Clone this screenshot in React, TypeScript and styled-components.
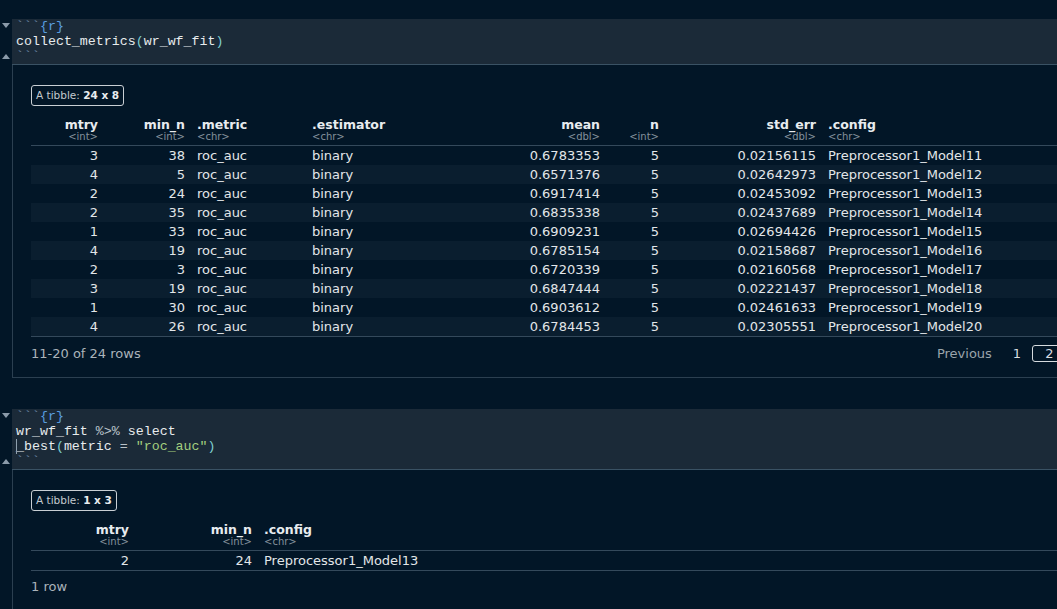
import React from "react";
import styled, { createGlobalStyle } from "styled-components";

const Global = createGlobalStyle`
  * { box-sizing: border-box; }
  html, body { margin: 0; padding: 0; background: #021627; overflow: hidden; }
  body { font-family: "DejaVu Sans", Verdana, sans-serif; color: #dfe4e8; }
`;

const Page = styled.div`
  display: flex;
  flex-direction: column;
  padding-top: 19px;
  width: 1057px;
  height: 609px;
`;

const Row = styled.div<{ $gap?: number; $grow?: boolean }>`
  display: flex;
  margin-top: ${(p) => p.$gap ?? 0}px;
  flex: ${(p) => (p.$grow ? 1 : "none")};
`;

const Gutter = styled.div`
  width: 12px;
  flex: none;
  display: flex;
  flex-direction: column;
  justify-content: space-between;
  align-items: center;
  padding: 4px 1px 6px 0;
`;

const Editor = styled.div`
  flex: 1;
  background: #1b2a38;
  border-bottom: 1px solid #3a5264;
  padding: 0 0 0 4px;
  font-family: "Liberation Mono", "DejaVu Sans Mono", monospace;
  font-size: 13.3px;
  line-height: 15px;
  color: #e4e8ea;
  white-space: pre;
`;

const CodeLine = styled.div`
  height: 15px;
  position: relative;
`;

const Tok = styled.span<{ $c: string }>`
  color: ${(p) => p.$c};
`;

const Cursor = styled.span`
  position: absolute;
  left: 0;
  top: 0;
  height: 15px;
  border-left: 1px solid #8fa0ae;
`;

const Output = styled.div<{ $bottom?: boolean }>`
  flex: 1;
  overflow: hidden;
  border-left: 1px solid #2b3f50;
  border-bottom: ${(p) => (p.$bottom ? "1px solid #2b3f50" : "none")};
  padding: 20px 0 ${(p) => (p.$bottom ? 15 : 0)}px 18px;
`;

const Wrap = styled.div`
  width: 1110px;
`;

const TibbleLabel = styled.div`
  width: fit-content;
  border: 1px solid #c9cfd4;
  border-radius: 3px;
  padding: 0 4px;
  font-size: 10.5px;
  line-height: 19px;
  color: #c3c9ce;
  b { color: #e8ecef; font-weight: bold; }
`;

const Table = styled.table`
  width: 100%;
  table-layout: fixed;
  border-collapse: collapse;
  font-size: 13px;
`;

const Th = styled.th<{ $w?: number; $right?: boolean }>`
  width: ${(p) => (p.$w ? `${p.$w}px` : "auto")};
  text-align: ${(p) => (p.$right ? "right" : "left")};
  padding: 11px 6px 3px;
  border-bottom: 1px solid #34495b;
  vertical-align: bottom;
`;

const ColName = styled.div`
  font-weight: bold;
  font-size: 12.5px;
  line-height: 15px;
  color: #e8ecef;
`;

const ColType = styled.div`
  font-weight: normal;
  font-size: 10px;
  line-height: 10px;
  color: #84919c;
`;

const Tr = styled.tr`
  &:nth-child(even) { background: #0a1e2f; }
  &:last-child td { border-bottom: 1px solid #34495b; }
`;

const Td = styled.td<{ $right?: boolean }>`
  text-align: ${(p) => (p.$right ? "right" : "left")};
  padding: 0 6px;
  line-height: 19px;
  height: 19px;
  white-space: nowrap;
  color: #e2e6e9;
`;

const Footer = styled.div`
  display: flex;
  justify-content: space-between;
  align-items: center;
  padding-top: 8px;
  font-size: 13px;
  line-height: 15px;
`;

const RowCount = styled.span`
  color: #aab3ba;
`;

const Pager = styled.div`
  display: flex;
  align-items: center;
  gap: 4px;
`;

const PageBtn = styled.span<{ $active?: boolean; $muted?: boolean }>`
  border: 1px solid ${(p) => (p.$active ? "#d6dbdf" : "transparent")};
  border-radius: 3px;
  padding: 0 ${(p) => (p.$active ? 12 : 6)}px;
  color: ${(p) => (p.$muted ? "#9ba4ab" : "#d8dde1")};
  &:first-child { margin-right: 3px; }
`;

const Tri = ({ up }: { up?: boolean }) => (
  <svg width="8" height="6" viewBox="0 0 8 6">
    <polygon points={up ? "0,6 8,6 4,1" : "0,0 8,0 4,5"} fill="#8a9aa9" />
  </svg>
);

const C = {
  tick: "#7391ae",
  brace: "#5a9fe0",
  text: "#e8ecee",
  paren: "#7fcfd0",
  op: "#b9c2c9",
  str: "#a3cf7f",
};

type Col = { name: string; type: string; w?: number; right?: boolean };

const cols1: Col[] = [
  { name: "mtry", type: "<int>", w: 73, right: true },
  { name: "min_n", type: "<int>", w: 87, right: true },
  { name: ".metric", type: "<chr>", w: 115 },
  { name: ".estimator", type: "<chr>", w: 200 },
  { name: "mean", type: "<dbl>", w: 100, right: true },
  { name: "n", type: "<int>", w: 59, right: true },
  { name: "std_err", type: "<dbl>", w: 157, right: true },
  { name: ".config", type: "<chr>" },
];

const data1: (string | number)[][] = [
  [3, 38, "0.6783353", "0.02156115", 11],
  [4, 5, "0.6571376", "0.02642973", 12],
  [2, 24, "0.6917414", "0.02453092", 13],
  [2, 35, "0.6835338", "0.02437689", 14],
  [1, 33, "0.6909231", "0.02694426", 15],
  [4, 19, "0.6785154", "0.02158687", 16],
  [2, 3, "0.6720339", "0.02160568", 17],
  [3, 19, "0.6847444", "0.02221437", 18],
  [1, 30, "0.6903612", "0.02461633", 19],
  [4, 26, "0.6784453", "0.02305551", 20],
].map(([m, n, mean, se, k]) => [
  m,
  n,
  "roc_auc",
  "binary",
  mean,
  5,
  se,
  `Preprocessor1_Model${k}`,
]);

const cols2: Col[] = [
  { name: "mtry", type: "<int>", w: 104, right: true },
  { name: "min_n", type: "<int>", w: 123, right: true },
  { name: ".config", type: "<chr>" },
];

const data2 = [[2, 24, "Preprocessor1_Model13"]];

const Tibble = ({ cols, rows }: { cols: Col[]; rows: (string | number)[][] }) => (
  <Table>
    <thead>
      <tr>
        {cols.map((c) => (
          <Th key={c.name} $w={c.w} $right={c.right}>
            <ColName>{c.name}</ColName>
            <ColType>{c.type}</ColType>
          </Th>
        ))}
      </tr>
    </thead>
    <tbody>
      {rows.map((r, i) => (
        <Tr key={i}>
          {r.map((v, j) => (
            <Td key={j} $right={cols[j].right}>
              {v}
            </Td>
          ))}
        </Tr>
      ))}
    </tbody>
  </Table>
);

export default function App() {
  return (
    <>
      <Global />
      <Page>
        <Row>
          <Gutter>
            <Tri />
            <Tri up />
          </Gutter>
          <Editor>
            <CodeLine>
              <Tok $c={C.tick}>```</Tok>
              <Tok $c={C.brace}>{"{r}"}</Tok>
            </CodeLine>
            <CodeLine>
              <Tok $c={C.text}>collect_metrics</Tok>
              <Tok $c={C.paren}>(</Tok>
              <Tok $c={C.text}>wr_wf_fit</Tok>
              <Tok $c={C.paren}>)</Tok>
            </CodeLine>
            <CodeLine>
              <Tok $c={C.tick}>```</Tok>
            </CodeLine>
          </Editor>
        </Row>
        <Row>
          <Gutter />
          <Output $bottom>
            <Wrap>
              <TibbleLabel>
                A tibble: <b>24 x 8</b>
              </TibbleLabel>
              <Tibble cols={cols1} rows={data1} />
              <Footer>
                <RowCount>11-20 of 24 rows</RowCount>
                <Pager>
                  <PageBtn $muted>Previous</PageBtn>
                  <PageBtn>1</PageBtn>
                  <PageBtn $active>2</PageBtn>
                  <PageBtn>3</PageBtn>
                  <PageBtn $muted>Next</PageBtn>
                </Pager>
              </Footer>
            </Wrap>
          </Output>
        </Row>
        <Row $gap={31}>
          <Gutter>
            <Tri />
            <Tri up />
          </Gutter>
          <Editor>
            <CodeLine>
              <Tok $c={C.tick}>```</Tok>
              <Tok $c={C.brace}>{"{r}"}</Tok>
            </CodeLine>
            <CodeLine>
              <Tok $c={C.text}>wr_wf_fit </Tok>
              <Tok $c={C.op}>%&gt;%</Tok>
              <Tok $c={C.text}> select</Tok>
            </CodeLine>
            <CodeLine>
              <Cursor />
              <Tok $c={C.text}>_best</Tok>
              <Tok $c={C.paren}>(</Tok>
              <Tok $c={C.text}>metric </Tok>
              <Tok $c={C.op}>=</Tok>
              <Tok $c={C.text}> </Tok>
              <Tok $c={C.str}>"roc_auc"</Tok>
              <Tok $c={C.paren}>)</Tok>
            </CodeLine>
            <CodeLine>
              <Tok $c={C.tick}>```</Tok>
            </CodeLine>
          </Editor>
        </Row>
        <Row $grow>
          <Gutter />
          <Output>
            <Wrap>
              <TibbleLabel>
                A tibble: <b>1 x 3</b>
              </TibbleLabel>
              <Tibble cols={cols2} rows={data2} />
              <Footer>
                <RowCount>1 row</RowCount>
              </Footer>
            </Wrap>
          </Output>
        </Row>
      </Page>
    </>
  );
}
